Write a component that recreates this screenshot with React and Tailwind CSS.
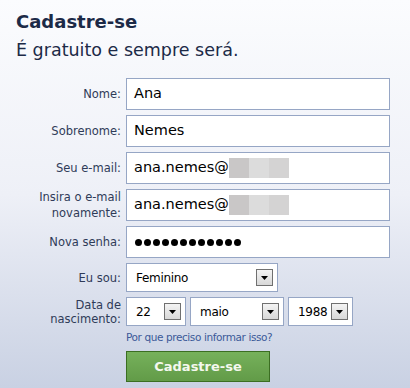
const Arrow = () => (
  <span className="flex h-[17px] w-[17px] shrink-0 items-center justify-center border border-[#707070] bg-gradient-to-b from-[#f4f4f4] to-[#d8d8d8]">
    <svg width="7" height="4" viewBox="0 0 7 4">
      <path d="M0 0h7L3.5 4z" fill="#000" />
    </svg>
  </span>
);

const Field = ({ label, children, tight }) => (
  <>
    <label className={`text-right text-[11.5px] text-[#2f3b58] ${tight ? 'leading-[14px]' : 'leading-[16px]'}`}>
      {label}
    </label>
    {children}
  </>
);

const TextBox = ({ children }) => (
  <div className="flex h-[32px] items-center border border-[#96a6c5] bg-white pl-[7px] text-[14.5px] text-black">
    {children}
  </div>
);

const Blur = () => (
  <span className="flex h-[20px]">
    <span className="w-[20px] bg-[#c9c7c7]" />
    <span className="w-[20px] bg-[#dcdcdc]" />
    <span className="w-[20px] bg-[#d4d3d3]" />
  </span>
);

const Select = ({ value, className }) => (
  <div className={`flex h-[29px] items-center justify-between border border-[#96a6c5] bg-white pl-[9px] text-[12px] tracking-[-0.3px] text-black ${className}`}>
    <span>{value}</span>
    <Arrow />
  </div>
);

const dots = Array.from({ length: 12 });

export default function App() {
  return (
    <div
      className="h-[388px] w-[410px] bg-gradient-to-b from-[#fbfcfe] via-[#eef0f7] to-[#c9d1e3] px-4 pt-[10px]"
      style={{ fontFamily: '"DejaVu Sans", Tahoma, sans-serif' }}
    >
      <h1 className="text-[18px] font-bold leading-[24px] text-[#1c2a47]">Cadastre-se</h1>
      <p className="mt-[4px] text-[17.5px] leading-[24px] text-[#1c2a47]">É gratuito e sempre será.</p>

      <div className="mt-[16px] grid grid-cols-[105px_264px] items-center gap-x-[5px] gap-y-[5px]">
        <Field label="Nome:">
          <TextBox>Ana</TextBox>
        </Field>
        <Field label="Sobrenome:">
          <TextBox>Nemes</TextBox>
        </Field>
        <Field label="Seu e-mail:">
          <TextBox>
            ana.nemes@
            <Blur />
          </TextBox>
        </Field>
        <Field
          label={
            <>
              Insira o e-mail
              <br />
              novamente:
            </>
          }
        >
          <TextBox>
            ana.nemes@
            <Blur />
          </TextBox>
        </Field>
        <Field label="Nova senha:">
          <TextBox>
            <span className="ml-[1px] flex gap-[2px]">
              {dots.map((_, i) => (
                <span key={i} className="h-[7px] w-[7px] rounded-full bg-black" />
              ))}
            </span>
          </TextBox>
        </Field>
        <Field label="Eu sou:">
          <Select value="Feminino" className="w-[152px] pr-[4px]" />
        </Field>
        <Field
          tight
          label={
            <>
              Data de
              <br />
              nascimento:
            </>
          }
        >
          <div className="flex gap-[4px]">
            <Select value="22" className="w-[60px] pr-[4px]" />
            <Select value="maio" className="w-[94px] pr-[4px]" />
            <Select value="1988" className="w-[65px] pr-[4px]" />
          </div>
        </Field>
        <span />
        <div className="-mt-[1px]">
          <a className="block text-[10.5px] leading-[14px] tracking-[-0.4px] text-[#3b5998]">Por que preciso informar isso?</a>
          <button className="mt-[7px] h-[31px] w-[144px] border border-[#3b6e22] bg-gradient-to-b from-[#76b15b] to-[#629b48] text-[13px] font-bold text-[#f4f8ee]">
            Cadastre-se
          </button>
        </div>
      </div>
    </div>
  );
}
